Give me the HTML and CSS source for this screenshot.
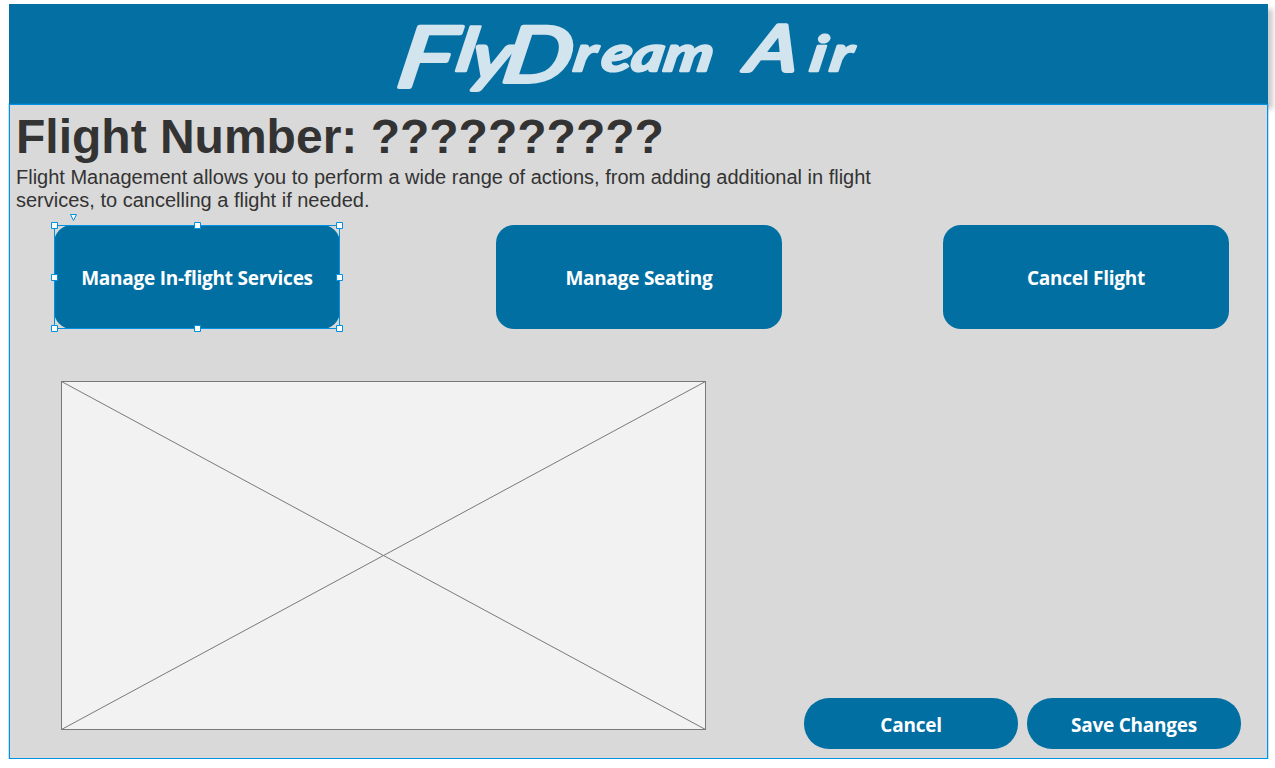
FILE: index.html
```
<!DOCTYPE html>
<html lang="en">
<head>
<meta charset="utf-8">
<title>FlyDream Air</title>
<link rel="stylesheet" href="styles.css">
</head>
<body>
<div class="app">
  <header class="banner">
    <svg class="wordmark" width="480" height="100" viewBox="384 4 480 100">
      <text transform="translate(391 71) skewX(-10) scale(1.25 1)"><tspan class="cap" font-size="84" x="5" y="16">F</tspan><tspan class="stem" x="51" y="0">l</tspan><tspan class="tail" x="64" y="8">y</tspan><tspan class="cap" font-size="77" x="89" y="11">D</tspan><tspan x="145" y="0">r</tspan><tspan x="167" y="0">e</tspan><tspan x="191" y="0">a</tspan><tspan x="217" y="0">m</tspan> <tspan class="cap" font-size="64" x="283" y="0">A</tspan><tspan x="334" y="0">i</tspan><tspan x="350" y="0">r</tspan></text>
    </svg>
  </header>
  <main class="panel">
    <h1 class="title">Flight Number: ??????????</h1>
    <p class="intro">Flight Management allows you to perform a wide range of actions, from adding additional in flight services, to cancelling a flight if needed.</p>
    <div class="actions">
      <button class="btn tile selected"><span>Manage In-flight Services</span>
        <svg class="selection" width="294" height="120" viewBox="0 0 294 120">
          <path class="frame" d="M4.500 12.500H289.500V115.500H4.500Z"/>
          <path class="marker" d="M20.500 1.500H26.500L23.500 7.500Z"/>
          <g class="handles">
            <path d="M1.500 9.500h6v6h-6zM144.500 9.500h6v6h-6zM286.500 9.500h6v6h-6zM1.500 112.500h6v6h-6zM144.500 112.500h6v6h-6zM286.500 112.500h6v6h-6z"/>
            <path d="M1.500 61.500h6v6h-6zM286.500 61.500h6v6h-6z"/>
          </g>
        </svg>
      </button>
      <button class="btn tile"><span>Manage Seating</span></button>
      <button class="btn tile last"><span>Cancel Flight</span></button>
    </div>
    <div class="lower">
      <svg class="placeholder" width="645" height="349" viewBox="0 0 645 349">
        <rect x=".5" y=".5" width="644" height="348"/>
        <path d="M.5 .5L644.500 348.500M644.500 .5L.5 348.500"/>
      </svg>
      <div class="footer">
        <button class="btn pill"><span>Cancel</span></button>
        <button class="btn pill"><span>Save Changes</span></button>
      </div>
    </div>
  </main>
</div>
</body>
</html>
```
FILE: styles.css
```
* { box-sizing: border-box; }
body { margin: 0; background: #fff; overflow: hidden; font-family: "Liberation Sans", Arial, sans-serif; color: #333; }
.app { width: 1259px; margin: 4px 0 0 9px; }
.banner { height: 100px; background: #046fa2; box-shadow: 5px 5px 5px rgba(0,0,0,.2); padding-left: 375px; }
.wordmark { display: block; overflow: visible; }
.wordmark text { font: italic 700 49px Lato, sans-serif; fill: #d2e4ed; stroke: #d2e4ed; stroke-width: 2.5px; stroke-linejoin: round; }
.wordmark .cap { font-weight: 400; stroke-width: 4px; }
.wordmark .stem { font-size: 60px; }
.wordmark .tail { font-size: 64px; font-weight: 400; stroke-width: 4px; }
.panel { position: relative; height: 655px; background: #d9d9d9; border: 1px solid #0092e5; box-shadow: 0 0 0 1px rgba(0,146,229,.25); padding: 5px 6px 0; display: flex; flex-direction: column; }
.title { margin: 0; font-size: 48px; line-height: 53px; height: 56px; white-space: nowrap; }
.intro { margin: 0; width: 875px; font-size: 20px; line-height: 23px; height: 46px; }
.actions { display: flex; margin: 13px 0 0 38px; }
.btn { border: 0; padding: 0; background: #026fa2; color: #fff; font: 700 19px "Open Sans", sans-serif; letter-spacing: -.25px; white-space: nowrap; display: flex; align-items: center; justify-content: center; }
.btn span { padding-top: 2px; }
.tile { width: 286px; height: 104px; border-radius: 18px; margin-right: 156px; }
.tile + .tile { margin-right: 161px; }
.tile.last { margin-right: 0; flex-shrink: 0; }
.selected { position: relative; }
.selection { position: absolute; left: -4px; top: -12px; fill: none; stroke: #0092e0; }
.marker, .handles { fill: #fff; }
.lower { display: flex; justify-content: space-between; align-items: flex-start; margin: 52px 20px 0 45px; }
.placeholder { display: block; fill: #f2f2f2; stroke: #797979; }
.footer { display: flex; gap: 9px; margin-top: 317px; }
.pill { width: 214px; height: 51px; border-radius: 25px; }
```
